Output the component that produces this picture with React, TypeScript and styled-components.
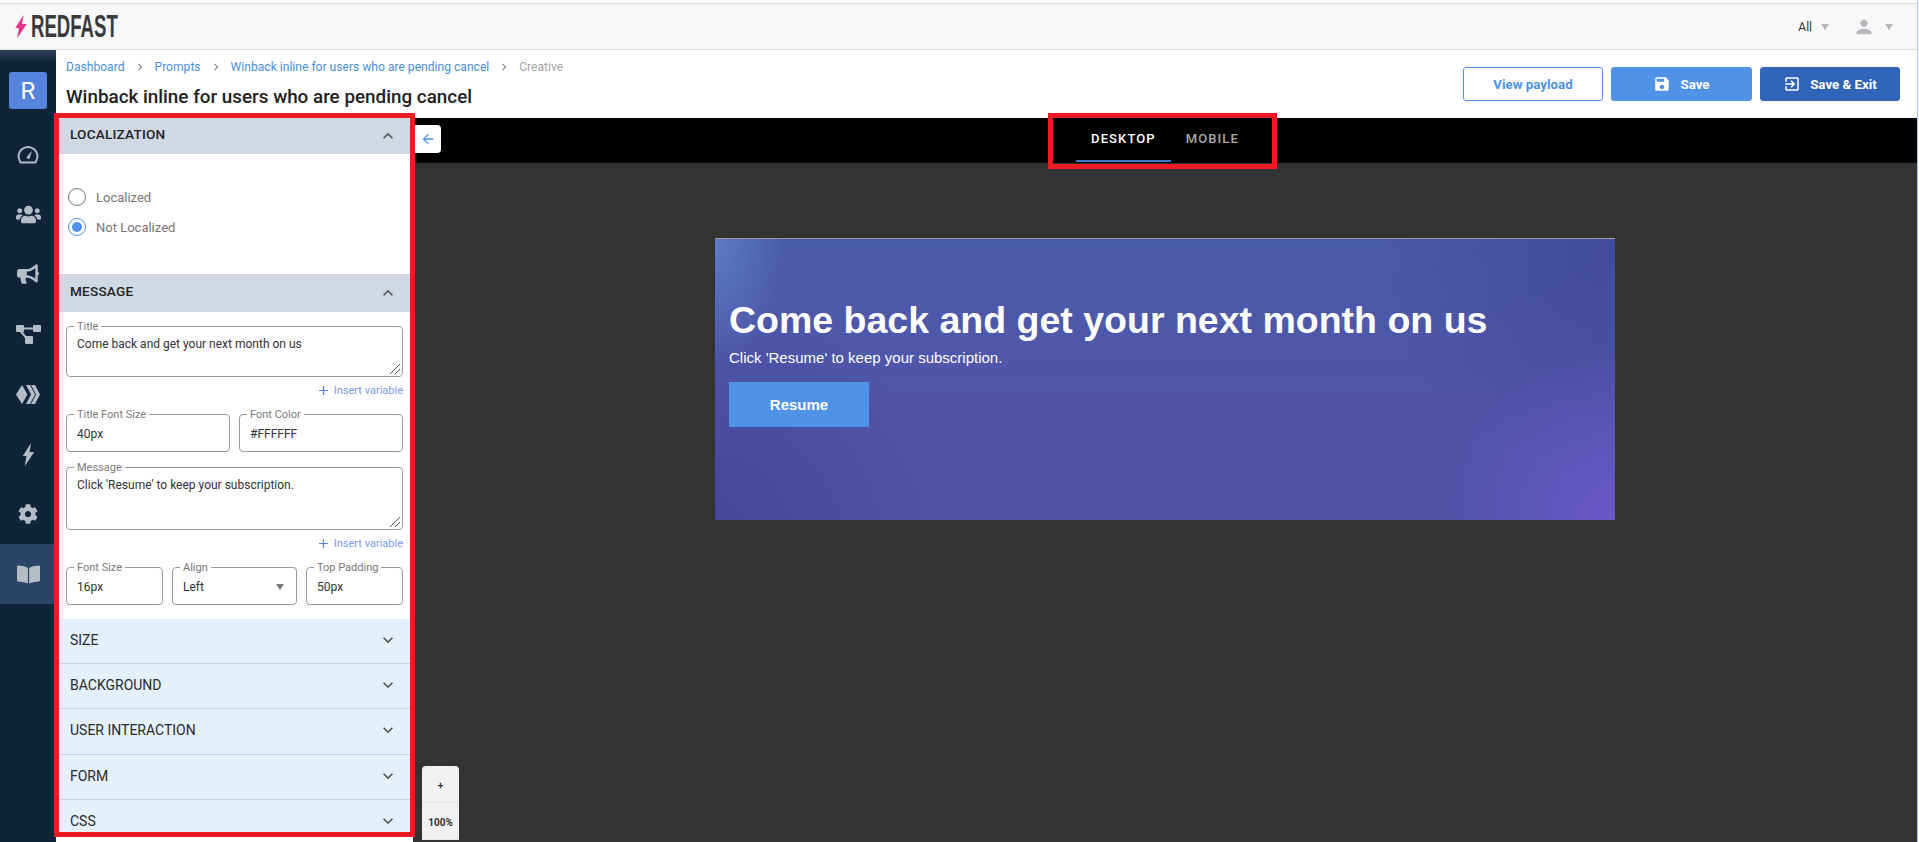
import React from 'react';
import styled, { createGlobalStyle } from 'styled-components';
import { FaBookOpen, FaBullhorn, FaCog, FaUsers } from 'react-icons/fa';
import { MdExitToApp, MdExpandLess, MdExpandMore, MdPerson, MdSave, MdArrowBack, MdChevronRight } from 'react-icons/md';

const GlobalStyle = createGlobalStyle`
	html, body {
		margin: 0;
		height: 100%;
		overflow: hidden;
		background: #fff;
	}
	* {
		box-sizing: border-box;
	}
`;

const Page = styled.div`
	display: flex;
	flex-direction: column;
	width: 1918px;
	height: 842px;
	padding-top: 3px;
	border-right: 1px solid #a9c6ee;
	overflow: hidden;
	font-family: Roboto, 'Liberation Sans', sans-serif;
`;

const TopBar = styled.header`
	display: flex;
	justify-content: space-between;
	align-items: center;
	flex: none;
	height: 47px;
	padding: 0 24px 0 15px;
	background: #f8f8f8;
	border-top: 1px solid #ddd;
	border-bottom: 1px solid #ddd;
`;

const Logo = styled.div`
	display: flex;
	align-items: center;
	gap: 4px;
	color: #3a3a3a;
`;

const LogoText = styled.span`
	display: inline-block;
	width: 87px;
	font-family: 'Liberation Sans', sans-serif;
	font-size: 31px;
	font-weight: 700;
	line-height: 31px;
	white-space: nowrap;
	transform: scaleX(0.6);
	transform-origin: left center;
`;

const TopActions = styled.div`
	display: flex;
	align-items: center;
	font-size: 12px;
	color: #333;
`;

const Caret = styled.span<{ $gap?: number; $color?: string }>`
	display: inline-block;
	width: 0;
	height: 0;
	margin-left: ${({ $gap }) => $gap ?? 9}px;
	border-left: 4.5px solid transparent;
	border-right: 4.5px solid transparent;
	border-top: 6px solid ${({ $color }) => $color ?? '#b3b8bf'};
`;

const UserIcon = styled.span`
	display: flex;
	margin-left: 24px;
	color: #b3b8bf;
`;

const Body = styled.div`
	display: flex;
	flex: 1;
	min-height: 0;
`;

const Sidebar = styled.nav`
	display: flex;
	flex-direction: column;
	flex: none;
	width: 56px;
	padding-top: 22px;
	background: linear-gradient(#2e4154, #0f2439 12px);
`;

const Badge = styled.div`
	display: flex;
	justify-content: center;
	align-items: center;
	width: 38px;
	height: 37px;
	margin: 0 0 15px 9px;
	border-radius: 3px;
	background: #5585dc;
	color: #fff;
	font-size: 24px;
`;

const NavItem = styled.div<{ $active?: boolean }>`
	display: flex;
	justify-content: center;
	align-items: center;
	height: 60px;
	color: #b4bcc6;
	background: ${({ $active }) => ($active ? '#2a4565' : 'transparent')};
`;

const Content = styled.main`
	display: flex;
	flex-direction: column;
	flex: 1;
	min-width: 0;
`;

const PageHeader = styled.div`
	display: flex;
	justify-content: space-between;
	flex: none;
	height: 68px;
	padding: 9px 17px 0 10px;
	background: #fff;
`;

const HeaderButtons = styled.div`
	display: flex;
	gap: 8px;
	padding-top: 8px;
`;

const Crumbs = styled.div`
	display: flex;
	align-items: center;
	height: 16px;
	gap: 8px;
	font-size: 12.1px;
	color: #4a90e2;
`;

const CrumbSep = styled.span`
	display: flex;
	color: #888;
`;

const CrumbCurrent = styled.span`
	color: #a2a2a2;
`;

const PageTitle = styled.h1`
	margin: 10px 0 0;
	font-size: 18.85px;
	line-height: 24px;
	font-weight: 500;
	color: #222;
`;

const ActionButton = styled.button<{ $variant: 'outline' | 'primary' | 'dark'; $width: number }>`
	display: flex;
	justify-content: center;
	align-items: center;
	gap: 9px;
	width: ${({ $width }) => $width}px;
	height: 34px;
	padding: 0;
	border-radius: 3px;
	border: 1px solid ${({ $variant }) => ($variant === 'dark' ? '#3064b8' : '#4f92e6')};
	background: ${({ $variant }) => ($variant === 'outline' ? '#fff' : $variant === 'dark' ? '#3064b8' : '#4f92e6')};
	color: ${({ $variant }) => ($variant === 'outline' ? '#4f92e6' : '#fff')};
	font-family: inherit;
	font-size: 13.3px;
	font-weight: 700;
`;

const Workspace = styled.div`
	display: flex;
	flex: 1;
	min-height: 0;
`;

const Panel = styled.aside`
	position: relative;
	flex: none;
	width: 357px;
	background: #fff;
`;

const PanelScroll = styled.div`
	height: 719px;
	overflow: hidden;
`;

const Highlight = styled.div<{ $top: number; $right: number; $bottom: number; $left: number }>`
	position: absolute;
	top: ${({ $top }) => $top}px;
	right: ${({ $right }) => $right}px;
	bottom: ${({ $bottom }) => $bottom}px;
	left: ${({ $left }) => $left}px;
	border: 5px solid #ed1c24;
	pointer-events: none;
	z-index: 5;
`;

const SectionHeader = styled.div<{ $height: number }>`
	display: flex;
	justify-content: space-between;
	align-items: center;
	height: ${({ $height }) => $height}px;
	padding: 0 15px 0 14px;
	background: #cfd8e3;
	font-size: 13.6px;
	font-weight: 500;
	letter-spacing: 0.2px;
	color: #222;
`;

const SectionName = styled.span`
	margin-bottom: 4px;
`;

const SectionChevron = styled.span`
	display: flex;
	color: #555;
`;

const RadioGroup = styled.div`
	display: flex;
	flex-direction: column;
	gap: 12px;
	height: 120px;
	padding: 34px 0 0 12px;
`;

const RadioRow = styled.label`
	display: flex;
	align-items: center;
	gap: 10px;
	height: 18px;
	font-size: 13px;
	color: #757575;
`;

const RadioDot = styled.span<{ $checked?: boolean }>`
	display: flex;
	justify-content: center;
	align-items: center;
	width: 18px;
	height: 18px;
	border-radius: 50%;
	border: 1.5px solid ${({ $checked }) => ($checked ? '#4f92e6' : '#757575')};

	&::after {
		content: '';
		display: ${({ $checked }) => ($checked ? 'block' : 'none')};
		width: 10px;
		height: 10px;
		border-radius: 50%;
		background: #4f92e6;
	}
`;

const MessageBody = styled.div`
	display: flex;
	flex-direction: column;
	height: 307px;
	padding: 14px 10px 0;
`;

const Row = styled.div<{ $columns: string }>`
	display: grid;
	grid-template-columns: ${({ $columns }) => $columns};
	gap: 9px;
`;

const Field = styled.div<{ $height: number; $multiline?: boolean }>`
	position: relative;
	display: flex;
	align-items: ${({ $multiline }) => ($multiline ? 'flex-start' : 'center')};
	justify-content: space-between;
	height: ${({ $height }) => $height}px;
	padding: ${({ $multiline }) => ($multiline ? '10px 10px 0' : '1px 12px 0 10px')};
	border: 1px solid #9a9a9a;
	border-radius: 4px;
	font-size: 12px;
	line-height: 14px;
	color: #333;
`;

const FieldLabel = styled.span`
	position: absolute;
	top: -6px;
	left: 7px;
	padding: 0 3px;
	background: #fff;
	font-size: 11px;
	line-height: 11px;
	color: #7a7a7a;
	white-space: nowrap;
`;

const ResizeGrip = styled.svg`
	position: absolute;
	right: 1px;
	bottom: 1px;
`;

const InsertRow = styled.div`
	display: flex;
	justify-content: flex-end;
	align-items: center;
	gap: 6px;
	height: 26px;
	padding-top: 1px;
	font-size: 11px;
	color: #7b9ce8;
`;

const Spacer = styled.div<{ $height: number }>`
	flex: none;
	height: ${({ $height }) => $height}px;
`;

const AccordionRow = styled.div`
	display: flex;
	justify-content: space-between;
	align-items: center;
	flex: none;
	height: 45.2px;
	padding: 0 15px 2px 14px;
	background: #e5f0fd;
	border-bottom: 1px solid #c9d3e0;
	font-size: 14px;
	color: #2a2a2a;
`;

const Preview = styled.section`
	display: flex;
	flex-direction: column;
	flex: 1;
	min-width: 0;
`;

const TabBar = styled.div`
	position: relative;
	display: flex;
	justify-content: center;
	flex: none;
	height: 45px;
	background: #000;
`;

const BackButton = styled.button`
	position: absolute;
	top: 7px;
	left: 0;
	display: flex;
	justify-content: center;
	align-items: center;
	width: 28px;
	height: 28px;
	padding: 0 0 0 2px;
	border: 0;
	border-radius: 0 4px 4px 0;
	background: #fff;
	color: #4f92e6;
`;

const Tabs = styled.div`
	position: relative;
	display: flex;
`;

const Tab = styled.div<{ $active?: boolean }>`
	display: flex;
	align-items: center;
	height: 44px;
	padding: 0 15px 1px;
	font-size: 13px;
	font-weight: 500;
	letter-spacing: 1.1px;
	color: ${({ $active }) => ($active ? '#fff' : '#a8a8a8')};
	border-bottom: 2px solid ${({ $active }) => ($active ? '#3f78c9' : 'transparent')};
`;

const Canvas = styled.div`
	position: relative;
	flex: 1;
	padding-top: 75px;
	background: #333;
`;

const Creative = styled.div`
	width: 900px;
	height: 282px;
	margin: 0 auto;
	padding: 59px 0 0 14px;
	border-top: 1px solid #9a9a9a;
	background:
		radial-gradient(ellipse 70px 130px at 0 0, rgba(110, 150, 215, 0.55), rgba(110, 150, 215, 0)),
		radial-gradient(circle at 100% 100%, rgba(112, 88, 205, 0.85), rgba(112, 88, 205, 0) 170px),
		radial-gradient(circle at 100% 0, rgba(62, 68, 150, 0.7), rgba(62, 68, 150, 0) 240px),
		radial-gradient(circle at 0 100%, rgba(62, 68, 150, 0.7), rgba(62, 68, 150, 0) 220px),
		linear-gradient(to bottom, #4a5ba9, #5155aa 60%, #5053a8);
	font-family: 'Liberation Sans', Arial, sans-serif;
	color: #fff;
`;

const CreativeTitle = styled.h2`
	margin: 0;
	font-size: 37.5px;
	line-height: 44px;
	font-weight: 700;
`;

const CreativeText = styled.p`
	margin: 7px 0 0;
	font-size: 15px;
	line-height: 18px;
`;

const ResumeButton = styled.button`
	display: block;
	width: 140px;
	height: 45px;
	margin-top: 15px;
	padding: 0;
	border: 0;
	background: #4f92e6;
	color: #fff;
	font-family: inherit;
	font-size: 15px;
	font-weight: 700;
`;

const ZoomControl = styled.div`
	position: absolute;
	top: 603px;
	left: 9px;
	width: 37px;
	border-radius: 4px 4px 0 0;
	background: #f1f1f1;
	color: #333;
`;

const ZoomStep = styled.div`
	display: flex;
	justify-content: center;
	align-items: center;
	height: 37px;
	padding-top: 2px;
	border-bottom: 1px solid #e2e2e2;
	font-size: 10px;
	font-weight: 700;
`;

const Grip = () => (
	<ResizeGrip width="12" height="12" viewBox="0 0 12 12" fill="none" stroke="#555" strokeWidth="1">
		<path d="M1 11 L11 1 M6 11 L11 6" />
	</ResizeGrip>
);

const GaugeIcon = () => (
	<svg width="22" height="20" viewBox="0 1 22 20" fill="none" stroke="currentColor">
		<path d="M3 18.5 A9.5 9.5 0 1 1 19 18.5 Q19 19.5 18 19.5 H4 Q3 19.5 3 18.5 Z" strokeWidth="2" />
		<path d="M9 15 L15 7.5 L12.5 16 Z" fill="currentColor" stroke="none" />
	</svg>
);

const FlowIcon = () => (
	<svg width="25" height="20" viewBox="0 0 25 20" fill="currentColor">
		<rect x="0" y="1" width="8" height="7" rx="1" />
		<rect x="17" y="1" width="8" height="7" rx="1" />
		<rect x="9" y="12" width="8" height="8" rx="1" />
		<path d="M7 3.5 H18 V5.5 H7 Z M5 6 L11 13 L9.5 14.5 L3.5 7.5 Z" />
	</svg>
);

const DiamondsIcon = () => (
	<svg width="24" height="19" viewBox="0 0 24 19" fill="currentColor">
		<path d="M6 0 L11.5 9.5 L6 19 L0 9.5 Z" />
		<path d="M10 0 H14 L19 9.5 L14 19 H10 L15 9.5 Z" />
		<path d="M15 0 H19 L24 9.5 L19 19 H15 L20 9.5 Z" />
	</svg>
);

const Bolt = ({ width, height, color }: { width: number; height: number; color: string }) => (
	<svg width={width} height={height} viewBox="0 0 11 22" fill={color}>
		<path d="M8 0 L0 12.5 H3.5 L2 22 L11 8.5 H6.5 Z" />
	</svg>
);

const PlusIcon = () => (
	<svg width="9" height="9" viewBox="0 0 9 9" stroke="#5a7fd8" strokeWidth="1.2">
		<path d="M4.5 0 V9 M0 4.5 H9" />
	</svg>
);

const accordions = ['SIZE', 'BACKGROUND', 'USER INTERACTION', 'FORM', 'CSS'];

export default function App() {
	return (
		<>
			<GlobalStyle />
			<Page>
				<TopBar>
					<Logo>
						<Bolt width={12} height={23} color="#e0348c" />
						<LogoText>REDFAST</LogoText>
					</Logo>
					<TopActions>
						All
						<Caret />
						<UserIcon>
							<MdPerson size={22} />
						</UserIcon>
						<Caret $gap={10} />
					</TopActions>
				</TopBar>
				<Body>
					<Sidebar>
						<Badge>R</Badge>
						<NavItem><GaugeIcon /></NavItem>
						<NavItem><FaUsers size={25} /></NavItem>
						<NavItem><FaBullhorn size={22} /></NavItem>
						<NavItem><FlowIcon /></NavItem>
						<NavItem><DiamondsIcon /></NavItem>
						<NavItem><Bolt width={13} height={23} color="currentColor" /></NavItem>
						<NavItem><FaCog size={20} /></NavItem>
						<NavItem $active><FaBookOpen size={23} /></NavItem>
					</Sidebar>
					<Content>
						<PageHeader>
							<div>
								<Crumbs>
									<span>Dashboard</span>
									<CrumbSep><MdChevronRight size={14} /></CrumbSep>
									<span>Prompts</span>
									<CrumbSep><MdChevronRight size={14} /></CrumbSep>
									<span>Winback inline for users who are pending cancel</span>
									<CrumbSep><MdChevronRight size={14} /></CrumbSep>
									<CrumbCurrent>Creative</CrumbCurrent>
								</Crumbs>
								<PageTitle>Winback inline for users who are pending cancel</PageTitle>
							</div>
							<HeaderButtons>
								<ActionButton $variant="outline" $width={140}>View payload</ActionButton>
								<ActionButton $variant="primary" $width={141}>
									<MdSave size={18} />
									Save
								</ActionButton>
								<ActionButton $variant="dark" $width={140}>
									<MdExitToApp size={18} />
									Save &amp; Exit
								</ActionButton>
							</HeaderButtons>
						</PageHeader>
						<Workspace>
							<Panel>
								<PanelScroll>
									<SectionHeader $height={36}>
										<SectionName>LOCALIZATION</SectionName>
										<SectionChevron><MdExpandLess size={20} /></SectionChevron>
									</SectionHeader>
									<RadioGroup>
										<RadioRow><RadioDot />Localized</RadioRow>
										<RadioRow><RadioDot $checked />Not Localized</RadioRow>
									</RadioGroup>
									<SectionHeader $height={38}>
										<SectionName>MESSAGE</SectionName>
										<SectionChevron><MdExpandLess size={20} /></SectionChevron>
									</SectionHeader>
									<MessageBody>
										<Field $height={51} $multiline>
											<FieldLabel>Title</FieldLabel>
											Come back and get your next month on us
											<Grip />
										</Field>
										<InsertRow><PlusIcon />Insert variable</InsertRow>
										<Spacer $height={11} />
										<Row $columns="164px 164px">
											<Field $height={38}>
												<FieldLabel>Title Font Size</FieldLabel>
												40px
											</Field>
											<Field $height={38}>
												<FieldLabel>Font Color</FieldLabel>
												#FFFFFF
											</Field>
										</Row>
										<Spacer $height={15} />
										<Field $height={63} $multiline>
											<FieldLabel>Message</FieldLabel>
											Click 'Resume' to keep your subscription.
											<Grip />
										</Field>
										<InsertRow><PlusIcon />Insert variable</InsertRow>
										<Spacer $height={11} />
										<Row $columns="97px 125px 97px">
											<Field $height={38}>
												<FieldLabel>Font Size</FieldLabel>
												16px
											</Field>
											<Field $height={38}>
												<FieldLabel>Align</FieldLabel>
												Left
												<Caret $color="#777" />
											</Field>
											<Field $height={38}>
												<FieldLabel>Top Padding</FieldLabel>
												50px
											</Field>
										</Row>
									</MessageBody>
									{accordions.map((name) => (
										<AccordionRow key={name}>
											{name}
											<SectionChevron><MdExpandMore size={20} /></SectionChevron>
										</AccordionRow>
									))}
								</PanelScroll>
								<Highlight $top={-5} $right={-2} $bottom={5} $left={-2} />
							</Panel>
							<Preview>
								<TabBar>
									<BackButton><MdArrowBack size={16} /></BackButton>
									<Tabs>
										<Tab $active>DESKTOP</Tab>
										<Tab>MOBILE</Tab>
										<Highlight $top={-5} $right={-23} $bottom={-6} $left={-28} />
									</Tabs>
								</TabBar>
								<Canvas>
									<Creative>
										<CreativeTitle>Come back and get your next month on us</CreativeTitle>
										<CreativeText>Click 'Resume' to keep your subscription.</CreativeText>
										<ResumeButton>Resume</ResumeButton>
									</Creative>
									<ZoomControl>
										<ZoomStep>+</ZoomStep>
										<ZoomStep>100%</ZoomStep>
									</ZoomControl>
								</Canvas>
							</Preview>
						</Workspace>
					</Content>
				</Body>
			</Page>
		</>
	);
}
